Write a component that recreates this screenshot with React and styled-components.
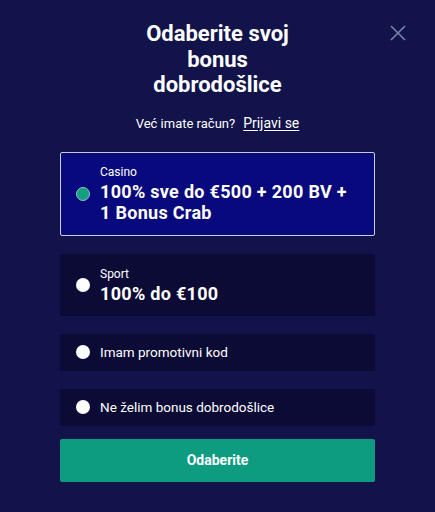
import React, { useState } from "react";
import styled, { createGlobalStyle, css } from "styled-components";

const GlobalStyle = createGlobalStyle`
  html, body {
    margin: 0;
    padding: 0;
    background: #11134a;
  }
  body {
    font-family: Roboto, "Liberation Sans", sans-serif;
    color: #fff;
  }
`;

const Modal = styled.div`
  position: relative;
  width: 435px;
  height: 512px;
  box-sizing: border-box;
  padding: 21px 60px 0;
  background: #11134a;
`;

const CloseButton = styled.button`
  position: absolute;
  top: 25px;
  right: 29px;
  width: 16px;
  height: 16px;
  padding: 0;
  border: none;
  background: none;
  cursor: pointer;
  display: flex;
`;

const Title = styled.h2`
  width: 180px;
  margin: 0 auto;
  font-size: 22px;
  line-height: 25.5px;
  font-weight: 700;
  text-align: center;
`;

const LoginLine = styled.p`
  margin: 15px 0 0;
  display: flex;
  justify-content: center;
  align-items: baseline;
  gap: 8px;
  font-size: 13px;
  line-height: 20px;
`;

const LoginLink = styled.a`
  color: #fff;
  font-size: 14px;
  text-decoration: underline;
  text-underline-offset: 2px;
  cursor: pointer;
`;

const Options = styled.div`
  margin-top: 18px;
  display: flex;
  flex-direction: column;
  gap: 18px;
`;

const Option = styled.label`
  display: flex;
  align-items: center;
  gap: 10px;
  box-sizing: border-box;
  min-height: ${(p) => p.$height}px;
  padding: 0 15px;
  background: #0c0b36;
  border: 1px solid transparent;
  cursor: pointer;

  ${(p) =>
    p.$active &&
    css`
      background: #08097c;
      border-color: #c9cbe0;
      border-radius: 2px;
    `}
`;

const Radio = styled.span`
  flex: none;
  width: 14px;
  height: 14px;
  border-radius: 50%;
  box-sizing: border-box;
  background: #fff;

  ${(p) =>
    p.$active &&
    css`
      background: #14a07f;
      border: 1px solid #9fb6d6;
    `}
`;

const OptionText = styled.div`
  display: flex;
  flex-direction: column;
`;

const Category = styled.span`
  font-size: 12px;
  line-height: 17px;
`;

const Offer = styled.span`
  font-size: 18px;
  line-height: 21px;
  font-weight: 700;
  letter-spacing: 0.3px;
`;

const Plain = styled.span`
  font-size: 13.5px;
  line-height: 18px;
`;

const SubmitButton = styled.button`
  margin-top: 13px;
  width: 100%;
  height: 43px;
  border: none;
  border-radius: 2px;
  background: #0e9c80;
  color: #fff;
  font-family: Roboto, "Liberation Sans", sans-serif;
  font-size: 14px;
  font-weight: 700;
  cursor: pointer;
`;

const options = [
  { id: "casino", category: "Casino", offer: "100% sve do €500 + 200 BV + 1 Bonus Crab", height: 84 },
  { id: "sport", category: "Sport", offer: "100% do €100", height: 62 },
  { id: "promo", label: "Imam promotivni kod", height: 37 },
  { id: "none", label: "Ne želim bonus dobrodošlice", height: 37 },
];

export default function App() {
  const [selected, setSelected] = useState("casino");

  return (
    <>
      <GlobalStyle />
      <Modal>
        <CloseButton aria-label="Zatvori">
          <svg width="16" height="16" viewBox="0 0 16 16">
            <path d="M1 1L15 15M15 1L1 15" stroke="#7d81a6" strokeWidth="1.6" />
          </svg>
        </CloseButton>
        <Title>Odaberite svoj bonus dobrodošlice</Title>
        <LoginLine>
          Već imate račun? <LoginLink>Prijavi se</LoginLink>
        </LoginLine>
        <Options>
          {options.map((o) => {
            const active = selected === o.id;
            return (
              <Option key={o.id} $active={active} $height={o.height} onClick={() => setSelected(o.id)}>
                <Radio $active={active} />
                {o.label ? (
                  <Plain>{o.label}</Plain>
                ) : (
                  <OptionText>
                    <Category>{o.category}</Category>
                    <Offer>{o.offer}</Offer>
                  </OptionText>
                )}
              </Option>
            );
          })}
        </Options>
        <SubmitButton>Odaberite</SubmitButton>
      </Modal>
    </>
  );
}
